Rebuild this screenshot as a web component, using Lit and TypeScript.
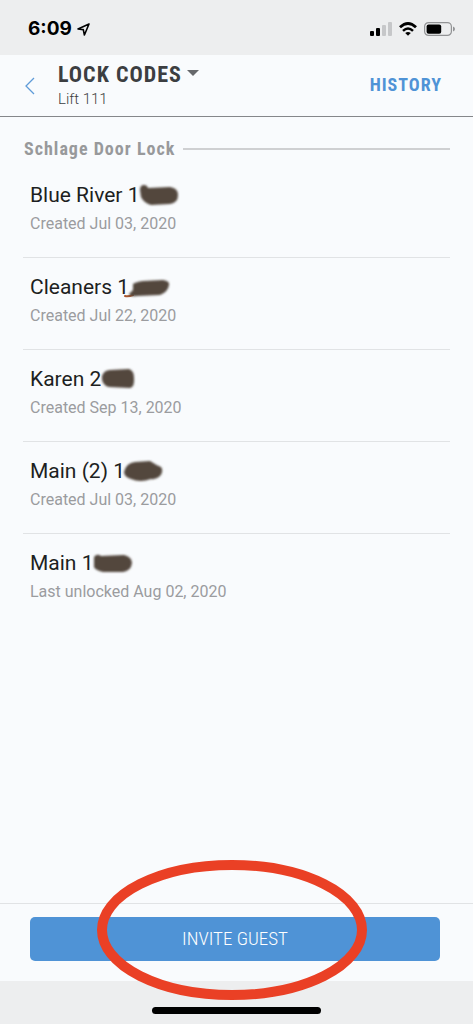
import { LitElement, html, css, svg } from "lit";
import { customElement, property } from "lit/decorators.js";

interface LockCode {
  name: string;
  detail: string;
  smudge: string;
  accent?: string;
}

// Each smudge is drawn in a 48x28 box that starts right at the end of the name.
const CODES: LockCode[] = [
  {
    name: "Blue River 1",
    detail: "Created Jul 03, 2020",
    smudge: "M1 9 Q1 4 5 4 Q8 4 9 7 L31 6 Q39 7 39 14 Q39 22 31 23 L12 24 Q5 22 2 16 Z",
  },
  {
    name: "Cleaners 1",
    detail: "Created Jul 22, 2020",
    smudge: "M4 11 Q7 9 14 8 L34 7 Q41 8 40 12 Q39 19 31 22 L8 23 Q0 24 0 21 Q2 19 4 17 Z",
    accent: "M-4 23 Q-1 24 4 22",
  },
  {
    name: "Karen 2",
    detail: "Created Sep 13, 2020",
    smudge: "M1 11 Q3 5 9 5 L28 4 Q33 6 33 12 Q34 22 29 23 L8 22 Q0 20 1 11 Z",
  },
  {
    name: "Main (2) 1",
    detail: "Created Jul 03, 2020",
    smudge: "M-1 15 Q1 6 10 5 L25 4 Q31 8 36 10 Q39 14 35 19 Q31 23 26 22 Q15 26 6 22 Q-1 20 -1 15 Z",
  },
  {
    name: "Main 1",
    detail: "Last unlocked Aug 02, 2020",
    smudge: "M1 8 Q4 4 8 7 L31 6 Q39 8 39 14 Q38 22 30 23 L10 23 Q2 21 1 18 Z",
  },
];

@customElement("status-bar")
export class StatusBar extends LitElement {
  static styles = css`
    :host {
      display: flex;
      align-items: center;
      justify-content: space-between;
      height: 55px;
      padding: 3px 18px 0 28px;
      box-sizing: border-box;
      color: #000;
    }
    .time {
      display: flex;
      align-items: center;
      gap: 5px;
      font: 700 19px/24px Inter, sans-serif;
    }
    .icons {
      display: flex;
      align-items: center;
      gap: 7px;
    }
    svg {
      display: block;
    }
  `;

  render() {
    return html`
      <div class="time">
        <span>6:09</span>
        <svg width="13" height="13" viewBox="0 0 13 13" aria-hidden="true">
          <path d="M12 1 L1 6 L6.3 6.6 L7.4 12 Z" fill="none" stroke="#000" stroke-width="1.6" stroke-linejoin="round" />
        </svg>
      </div>
      <div class="icons">
        <svg width="22" height="14" viewBox="0 0 22 14" aria-hidden="true">
          <rect x="0" y="9" width="4" height="5" rx="1" />
          <rect x="6" y="6" width="4" height="8" rx="1" />
          <rect x="12" y="3" width="4" height="11" rx="1" fill="#c6c7c9" />
          <rect x="18" y="0" width="4" height="14" rx="1" fill="#c6c7c9" />
        </svg>
        <svg width="18" height="14" viewBox="0 0 18 14" aria-hidden="true">
          <path d="M1 5.3 Q9 -2.3 17 5.3" fill="none" stroke="#000" stroke-width="2.8" />
          <path d="M4 8.8 Q9 4.2 14 8.8" fill="none" stroke="#000" stroke-width="2.5" />
          <path d="M6.2 11 Q9 8.8 11.8 11 L9 13.8 Z" />
        </svg>
        <svg width="31" height="14" viewBox="0 0 31 14" aria-hidden="true">
          <rect x=".6" y=".6" width="26.8" height="12.8" rx="4" fill="none" stroke="#929395" stroke-width="1.2" />
          <rect x="2.6" y="2.4" width="14.6" height="9.4" rx="2" />
          <path d="M29 4.6 Q31 5.4 31 7 Q31 8.6 29 9.4 Z" fill="#929395" />
        </svg>
      </div>
    `;
  }
}

@customElement("code-row")
export class CodeRow extends LitElement {
  @property({ attribute: false }) code!: LockCode;

  static styles = css`
    :host {
      display: block;
      padding: 15px 7px 18px;
    }
    .name {
      display: flex;
      align-items: center;
      margin: 0;
      font: 400 21px/28px Roboto, sans-serif;
      color: #1d1f22;
    }
    .smudge {
      display: block;
      overflow: visible;
    }
    .detail {
      margin: 0;
      font: 400 16px/30px Roboto, sans-serif;
      color: #9b9c9f;
    }
  `;

  render() {
    const { name, detail, smudge, accent } = this.code;
    return html`
      <h3 class="name">
        <span>${name}</span>
        <svg class="smudge" width="48" height="28" viewBox="0 0 48 28" aria-hidden="true">
          <defs>
            <filter id="soft" x="-20%" y="-20%" width="140%" height="140%">
              <feGaussianBlur stdDeviation="1" />
            </filter>
          </defs>
          ${accent ? svg`<path d=${accent} fill="none" stroke="#a8562f" stroke-width="2" stroke-linecap="round" />` : null}
          <path d=${smudge} fill="#52463d" filter="url(#soft)" />
        </svg>
      </h3>
      <p class="detail">${detail}</p>
    `;
  }
}

@customElement("app-root")
export class AppRoot extends LitElement {
  static styles = css`
    :host {
      display: flex;
      flex-direction: column;
      min-height: 100vh;
      background: #edeeef;
      font-family: "Roboto Condensed", "Liberation Sans Narrow", Roboto, sans-serif;
    }
    button {
      font-family: inherit;
    }
    .header {
      display: flex;
      align-items: center;
      height: 61px;
      padding: 0 31px 0 24px;
      border-bottom: 1px solid #85878a;
      background: #f9fbfd;
    }
    .back {
      display: flex;
      padding: 0;
      margin-right: 22px;
      border: 0;
      background: none;
    }
    .heading {
      flex: 1;
    }
    .picker {
      display: flex;
      align-items: center;
      gap: 5px;
      padding: 0;
      border: 0;
      background: none;
      font-size: 22px;
      line-height: 26px;
      font-weight: 700;
      letter-spacing: 1px;
      color: #3c3e41;
    }
    .place {
      margin: 0;
      font: 300 15px/22px Roboto, sans-serif;
      color: #3c3e41;
    }
    .history {
      font-size: 18px;
      line-height: 24px;
      padding-bottom: 2px;
      font-weight: 700;
      letter-spacing: 1px;
      color: #4f93d6;
      text-decoration: none;
    }
    .content {
      flex: 1;
      padding: 20px 23px;
      background: #f9fbfd;
    }
    .section {
      display: flex;
      align-items: center;
      gap: 8px;
      margin: 0;
      padding-left: 1px;
      font-weight: 700;
      font-size: 18px;
      line-height: 24px;
      letter-spacing: 1px;
      color: #98999b;
    }
    .section::after {
      content: "";
      flex: 1;
      height: 2px;
      background: #cfd0d2;
    }
    .codes {
      margin: 5px 0 0;
      padding: 0;
      list-style: none;
    }
    .codes li + li {
      border-top: 1px solid #e1e3e5;
    }
    .footer {
      position: relative;
      padding: 13px 33px 20px 30px;
      border-top: 1px solid #e1e3e5;
      background: #f9fbfd;
    }
    .invite {
      display: block;
      width: 100%;
      height: 44px;
      padding: 0 0 1px;
      border: 0;
      border-radius: 5px;
      background: #4f93d6;
      color: #fff;
      font-size: 19px;
      font-weight: 300;
    }
    .ring {
      position: absolute;
      left: 50%;
      top: -45px;
      margin-left: -141px;
      pointer-events: none;
    }
    .home {
      display: flex;
      justify-content: center;
      height: 43px;
      align-items: flex-end;
    }
    .bar {
      width: 169px;
      height: 7px;
      margin-bottom: 10px;
      border-radius: 4px;
      background: #000;
    }
  `;

  render() {
    return html`
      <status-bar></status-bar>
      <header class="header">
        <button class="back" aria-label="Back">
          <svg width="12" height="18" viewBox="0 0 12 18" aria-hidden="true">
            <path d="M10 1 L2 9 L10 17" fill="none" stroke="#5f9bd8" stroke-width="1.3" />
          </svg>
        </button>
        <div class="heading">
          <button class="picker">
            <span>LOCK CODES</span>
            <svg width="12" height="10" viewBox="0 0 12 10" aria-hidden="true"><path d="M0 0 H12 L6 6 Z" fill="#66686b" /></svg>
          </button>
          <p class="place">Lift 111</p>
        </div>
        <a class="history" href="#history">HISTORY</a>
      </header>
      <main class="content">
        <h2 class="section">Schlage Door Lock</h2>
        <ul class="codes">
          ${CODES.map((code) => html`<li><code-row .code=${code}></code-row></li>`)}
        </ul>
      </main>
      <footer class="footer">
        <button class="invite">INVITE GUEST</button>
        <svg class="ring" width="272" height="142" viewBox="0 0 272 142" aria-hidden="true">
          <ellipse cx="136" cy="71" rx="130" ry="65" fill="none" stroke="#ea4025" stroke-width="10" />
        </svg>
      </footer>
      <div class="home"><div class="bar"></div></div>
    `;
  }
}
